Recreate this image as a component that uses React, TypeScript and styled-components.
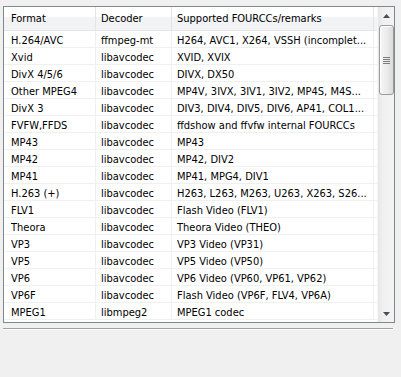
import React from "react";
import styled, { createGlobalStyle } from "styled-components";

const GlobalStyle = createGlobalStyle`
  html, body {
    margin: 0;
    padding: 0;
    background: #f0f0f0;
  }
  body {
    font-family: "DejaVu Sans Condensed", "Liberation Sans", Arial, sans-serif;
    font-size: 11px;
    color: #000;
  }
`;

const Page = styled.div`
  width: 401px;
  height: 377px;
  box-sizing: border-box;
  padding: 6px 6px 0 3px;
  background: #f0f0f0;
  display: flex;
  flex-direction: column;
`;

const ListBox = styled.div`
  width: 392px;
  height: 317px;
  box-sizing: border-box;
  border: 1px solid #828790;
  background: #fff;
  display: flex;
  overflow: hidden;
`;

const ListArea = styled.div`
  flex: 1;
  display: flex;
  flex-direction: column;
  overflow: hidden;
`;

const COLS = "92px 76px 202px";

const HeaderRow = styled.div`
  display: grid;
  grid-template-columns: ${COLS};
  height: 24px;
  box-sizing: border-box;
  border-bottom: 1px solid #e5e5e5;
  background: linear-gradient(#ffffff 0, #ffffff 43%, #f2f3f5 43%, #f2f3f5 100%);
`;

const HeaderCell = styled.div<{ $first?: boolean }>`
  padding-left: ${(p) => (p.$first ? "7px" : "5px")};
  border-right: 1px solid #e3e4e6;
  line-height: 23px;
  white-space: nowrap;
  overflow: hidden;
`;

const Row = styled.div`
  display: grid;
  grid-template-columns: ${COLS};
  height: 17px;
  box-sizing: border-box;
  border-bottom: 1px solid #f0f0f0;
`;

const Cell = styled.div<{ $first?: boolean }>`
  padding: 2px 3px 0 ${(p) => (p.$first ? "7px" : "5px")};
  height: 16px;
  box-sizing: border-box;
  border-right: 1px solid #f0f0f0;
  line-height: 16px;
  white-space: nowrap;
  overflow: hidden;
  text-overflow: ellipsis;
`;

const ScrollBar = styled.div`
  width: 17px;
  display: flex;
  flex-direction: column;
  background: linear-gradient(to right, #e6e6e6 0, #f0f0f0 30%, #f3f3f3 100%);
  border-left: 1px solid #f7f7f7;
  box-sizing: border-box;
`;

const ArrowButton = styled.div`
  height: 17px;
  display: flex;
  align-items: center;
  justify-content: center;
  flex: none;
`;

const Track = styled.div`
  flex: 1;
  display: flex;
  flex-direction: column;
  align-items: center;
`;

const Thumb = styled.div`
  margin-top: 1px;
  width: 15px;
  height: 70px;
  box-sizing: border-box;
  border: 1px solid #9b9b9b;
  border-radius: 3px;
  background: linear-gradient(to right, #f6f6f6 0, #ececec 50%, #dadada 100%);
  box-shadow: inset 1px 1px 0 #ffffff;
  display: flex;
  align-items: center;
  justify-content: center;
`;

const Separator = styled.div`
  margin-top: 5px;
  width: 390px;
  height: 2px;
  border-top: 1px solid #a0a0a0;
  border-bottom: 1px solid #ffffff;
  box-sizing: border-box;
`;

const UpArrow = () => (
  <svg width="7" height="4" viewBox="0 0 7 4">
    <path d="M3.5 0 L7 4 L0 4 Z" fill="#4a4d52" />
  </svg>
);

const DownArrow = () => (
  <svg width="7" height="4" viewBox="0 0 7 4">
    <path d="M0 0 L7 0 L3.5 4 Z" fill="#4a4d52" />
  </svg>
);

const Grip = () => (
  <svg width="7" height="7" viewBox="0 0 7 7">
    {[0, 2, 4, 6].map((y) => (
      <rect key={y} x="0" y={y} width="7" height="1" fill="#7b7b7b" />
    ))}
  </svg>
);

const codecs: [string, string, string][] = [
  ["H.264/AVC", "ffmpeg-mt", "H264, AVC1, X264, VSSH (incomplet..."],
  ["Xvid", "libavcodec", "XVID, XVIX"],
  ["DivX 4/5/6", "libavcodec", "DIVX, DX50"],
  ["Other MPEG4", "libavcodec", "MP4V, 3IVX, 3IV1, 3IV2, MP4S, M4S..."],
  ["DivX 3", "libavcodec", "DIV3, DIV4, DIV5, DIV6, AP41, COL1..."],
  ["FVFW,FFDS", "libavcodec", "ffdshow and ffvfw internal FOURCCs"],
  ["MP43", "libavcodec", "MP43"],
  ["MP42", "libavcodec", "MP42, DIV2"],
  ["MP41", "libavcodec", "MP41, MPG4, DIV1"],
  ["H.263 (+)", "libavcodec", "H263, L263, M263, U263, X263, S26..."],
  ["FLV1", "libavcodec", "Flash Video (FLV1)"],
  ["Theora", "libavcodec", "Theora Video (THEO)"],
  ["VP3", "libavcodec", "VP3 Video (VP31)"],
  ["VP5", "libavcodec", "VP5 Video (VP50)"],
  ["VP6", "libavcodec", "VP6 Video (VP60, VP61, VP62)"],
  ["VP6F", "libavcodec", "Flash Video (VP6F, FLV4, VP6A)"],
  ["MPEG1", "libmpeg2", "MPEG1 codec"],
];

export default function App() {
  return (
    <>
      <GlobalStyle />
      <Page>
        <ListBox>
          <ListArea>
            <HeaderRow>
              <HeaderCell $first>Format</HeaderCell>
              <HeaderCell>Decoder</HeaderCell>
              <HeaderCell>Supported FOURCCs/remarks</HeaderCell>
            </HeaderRow>
            {codecs.map(([format, decoder, remarks]) => (
              <Row key={format}>
                <Cell $first>{format}</Cell>
                <Cell>{decoder}</Cell>
                <Cell>{remarks}</Cell>
              </Row>
            ))}
          </ListArea>
          <ScrollBar>
            <ArrowButton>
              <UpArrow />
            </ArrowButton>
            <Track>
              <Thumb>
                <Grip />
              </Thumb>
            </Track>
            <ArrowButton>
              <DownArrow />
            </ArrowButton>
          </ScrollBar>
        </ListBox>
        <Separator />
      </Page>
    </>
  );
}
